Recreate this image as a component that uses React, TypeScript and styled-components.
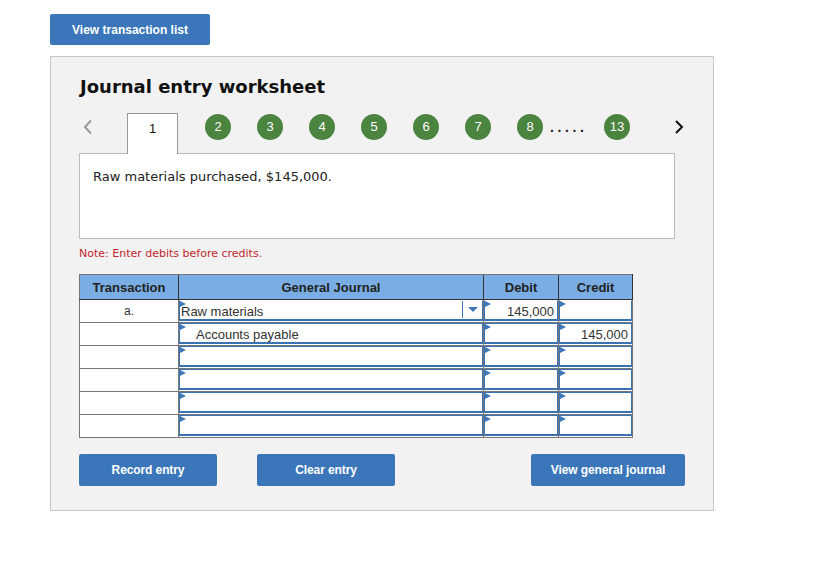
import React from "react";
import styled, { createGlobalStyle } from "styled-components";

const Global = createGlobalStyle`
  html, body { margin: 0; padding: 0; background: #ffffff; }
  body { font-family: "Liberation Sans", Arial, sans-serif; }
`;

const Page = styled.div`
  padding: 14px 0 40px 50px;
`;

const BlueButton = styled.button<{ $w: number }>`
  width: ${(p) => p.$w}px;
  height: 32px;
  border: none;
  border-radius: 2px;
  background: #3a76b9;
  color: #ffffff;
  font-family: "Liberation Sans", Arial, sans-serif;
  font-weight: bold;
  font-size: 12px;
  letter-spacing: -0.1px;
  padding: 0;
  cursor: pointer;
`;

const TopButton = styled(BlueButton)`
  height: 31px;
  letter-spacing: 0;
`;

const Panel = styled.div`
  margin-top: 11px;
  width: 634px;
  height: 434px;
  border: 1px solid #c8c8c8;
  background: #f2f2f2;
  padding: 19px 0 0 28px;
`;

const Title = styled.h2`
  margin: 0;
  height: 22px;
  line-height: 22px;
  font-family: "DejaVu Sans", Verdana, sans-serif;
  font-weight: bold;
  font-size: 18px;
  color: #111;
  padding-left: 1px;
`;

const NavRow = styled.div`
  margin-top: 15px;
  display: flex;
  align-items: flex-start;
  height: 40px;
  position: relative;
  z-index: 1;
`;

const Chevron = styled.div<{ $w: number; $ml: number }>`
  width: ${(p) => p.$w}px;
  margin-left: ${(p) => p.$ml}px;
  height: 28px;
  display: flex;
  align-items: center;
`;

const Tab = styled.div`
  width: 49px;
  height: 40px;
  border: 1px solid #999999;
  border-bottom: none;
  background: #ffffff;
  font-size: 13px;
  color: #111;
  text-align: center;
  line-height: 29px;
`;

const Circle = styled.div<{ $ml: number }>`
  width: 26px;
  height: 26px;
  margin-left: ${(p) => p.$ml}px;
  margin-top: 1px;
  border-radius: 50%;
  background: #4a843f;
  color: #ffffff;
  font-size: 13px;
  line-height: 26px;
  text-align: center;
`;

const Dots = styled.div`
  box-sizing: border-box;
  width: 61px;
  padding-left: 7px;
  font-size: 14px;
  font-weight: bold;
  letter-spacing: 3.6px;
  color: #222;
  line-height: 26px;
  margin-top: 1px;
`;

const DescBox = styled.div`
  width: 594px;
  height: 84px;
  border: 1px solid #bbbbbb;
  background: #ffffff;
`;

const DescText = styled.p`
  margin: 0;
  padding: 15px 0 0 13px;
  font-family: "DejaVu Sans", Verdana, sans-serif;
  font-size: 13px;
  line-height: 16px;
  color: #222;
`;

const Note = styled.p`
  margin: 8px 0 0 0;
  font-family: "DejaVu Sans", Verdana, sans-serif;
  font-size: 11px;
  line-height: 14px;
  color: #c1272d;
`;

const Table = styled.table`
  margin-top: 13px;
  border-collapse: collapse;
  table-layout: fixed;
  width: 554px;
  border: 1px solid #777777;
  background: #ffffff;
`;

const Th = styled.th<{ $w: number }>`
  width: ${(p) => p.$w}px;
  height: 24px;
  padding: 0;
  background: #7aade4;
  border-left: 1px solid #333333;
  border-bottom: 1px solid #333333;
  border-top: 1px solid #777777;
  font-size: 13px;
  font-weight: bold;
  color: #222;
  text-align: center;
  &:first-child { border-left: 1px solid #777777; }
  &:last-child { border-right: 1px solid #333333; }
`;

const Td = styled.td`
  height: 22px;
  padding: 3px 0 0 0;
  box-sizing: border-box;
  border: 1px solid #777777;
  font-size: 12px;
  color: #333;
  text-align: center;
  vertical-align: top;
  line-height: 17px;
`;

const InputTd = styled.td`
  height: 22px;
  padding: 0;
  border: 1px solid #777777;
  vertical-align: top;
`;

const Field = styled.div<{ $align: "left" | "right"; $indent?: boolean; $first?: boolean }>`
  position: relative;
  height: 21px;
  box-sizing: border-box;
  border: 1px solid #3a72b4;
  border-top-color: ${(p) => (p.$first ? "transparent" : "#3a72b4")};
  border-bottom-width: 2px;
  background: #ffffff;
  font-size: 13px;
  line-height: 17px;
  color: #333;
  text-align: ${(p) => p.$align};
  padding: ${(p) => (p.$indent ? "2px 2px 0 16px" : "2px 3px 0 1px")};
  white-space: nowrap;
  &::before {
    content: "";
    position: absolute;
    left: 0;
    top: 0;
    border-style: solid;
    border-width: 3px 0 3px 6px;
    border-color: transparent transparent transparent #3e77ba;
  }
`;

const DropArrow = styled.span`
  position: absolute;
  right: 0;
  top: 0;
  width: 19px;
  height: 17px;
  border-left: 1px solid #3e77ba;
  display: flex;
  align-items: center;
  justify-content: center;
  &::after {
    content: "";
    border-style: solid;
    border-width: 5px 5px 0 5px;
    border-color: #3e77ba transparent transparent transparent;
  }
`;

const ButtonRow = styled.div`
  margin-top: 16px;
  width: 606px;
  display: flex;
  gap: 40px;
`;

const RightButton = styled(BlueButton)`
  margin-left: auto;
`;

type Row = {
  tx: string;
  account: string;
  indent?: boolean;
  debit: string;
  credit: string;
  dropdown?: boolean;
};

const rows: Row[] = [
  { tx: "a.", account: "Raw materials", debit: "145,000", credit: "", dropdown: true },
  { tx: "", account: "Accounts payable", indent: true, debit: "", credit: "145,000" },
  { tx: "", account: "", debit: "", credit: "" },
  { tx: "", account: "", debit: "", credit: "" },
  { tx: "", account: "", debit: "", credit: "" },
  { tx: "", account: "", debit: "", credit: "" },
];

const ChevronLeft = () => (
  <svg width="10" height="16" viewBox="0 0 10 16">
    <polyline points="8,1.5 2,8 8,14.5" fill="none" stroke="#9a9a9a" strokeWidth="2" />
  </svg>
);

const ChevronRight = () => (
  <svg width="10" height="16" viewBox="0 0 10 16">
    <polyline points="2,2 8,8 2,14" fill="none" stroke="#111" strokeWidth="2" />
  </svg>
);

export default function App() {
  const steps = [2, 3, 4, 5, 6, 7, 8];
  return (
    <>
      <Global />
      <Page>
        <TopButton $w={160}>View transaction list</TopButton>
        <Panel>
          <Title>Journal entry worksheet</Title>
          <NavRow>
            <Chevron $w={44} $ml={4}>
              <ChevronLeft />
            </Chevron>
            <Tab>1</Tab>
            {steps.map((n, i) => (
              <Circle key={n} $ml={i === 0 ? 27 : 26}>
                {n}
              </Circle>
            ))}
            <Dots>.....</Dots>
            <Circle $ml={0}>13</Circle>
            <Chevron $w={12} $ml={44}>
              <ChevronRight />
            </Chevron>
          </NavRow>
          <DescBox>
            <DescText>Raw materials purchased, $145,000.</DescText>
          </DescBox>
          <Note>Note: Enter debits before credits.</Note>
          <Table>
            <thead>
              <tr>
                <Th $w={98}>Transaction</Th>
                <Th $w={304}>General Journal</Th>
                <Th $w={74}>Debit</Th>
                <Th $w={73}>Credit</Th>
              </tr>
            </thead>
            <tbody>
              {rows.map((r, i) => (
                <tr key={i}>
                  <Td>{r.tx}</Td>
                  <InputTd>
                    <Field $align="left" $indent={r.indent} $first={i === 0}>
                      {r.account}
                      {r.dropdown && <DropArrow />}
                    </Field>
                  </InputTd>
                  <InputTd>
                    <Field $align="right" $first={i === 0}>{r.debit}</Field>
                  </InputTd>
                  <InputTd>
                    <Field $align="right" $first={i === 0}>{r.credit}</Field>
                  </InputTd>
                </tr>
              ))}
            </tbody>
          </Table>
          <ButtonRow>
            <BlueButton $w={138}>Record entry</BlueButton>
            <BlueButton $w={138}>Clear entry</BlueButton>
            <RightButton $w={154}>View general journal</RightButton>
          </ButtonRow>
        </Panel>
      </Page>
    </>
  );
}
